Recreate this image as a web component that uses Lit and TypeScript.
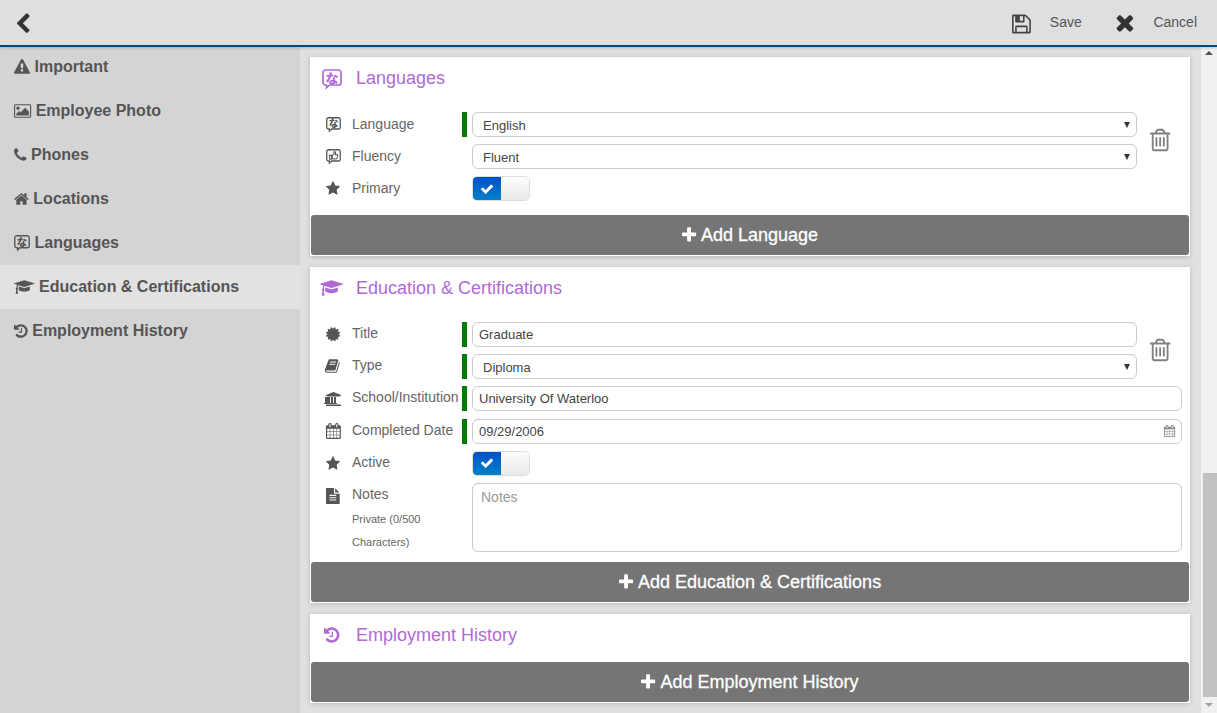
import { LitElement, html, svg, css } from "lit";
import { customElement } from "lit/decorators.js";

const P: Record<string, [string, string]> = {
  chevron: ["256 0 1280 1792", "M1427 301l-531 531 531 531q19 19 19 45t-19 45l-166 166q-19 19-45 19t-45-19l-742-742q-19-19-19-45t19-45l742-742q19-19 45-19t45 19l166 166q19 19 19 45t-19 45z"],
  warning: ["0 0 1792 1792", "M1024 1375v-190q0-14-9.5-23.5t-22.5-9.5h-192q-13 0-22.5 9.5t-9.5 23.5v190q0 14 9.5 23.5t22.5 9.5h192q13 0 22.5-9.5t9.5-23.5zm-2-374l18-459q0-12-10-19-13-11-24-11h-220q-11 0-24 11-10 7-10 21l17 457q0 10 10 16.5t24 6.5h185q14 0 23.5-6.5t10.5-16.5zm-14-934l768 1408q35 63-2 126-17 29-46.5 46t-63.5 17h-1536q-34 0-63.5-17t-46.5-46q-37-63-2-126l768-1408q17-31 47-49t65-18 65 18 47 49z"],
  picture: ["-64 0 1920 1792", "M576 576q0 80-56 136t-136 56-136-56-56-136 56-136 136-56 136 56 56 136zm1024 384v448h-1408v-192l320-320 160 160 512-512zm96-704h-1600q-13 0-22.5 9.5t-9.5 22.5v1216q0 13 9.5 22.5t22.5 9.5h1600q13 0 22.5-9.5t9.5-22.5v-1216q0-13-9.5-22.5t-22.5-9.5zm160 32v1216q0 66-47 113t-113 47h-1600q-66 0-113-47t-47-113v-1216q0-66 47-113t113-47h1600q66 0 113 47t47 113z"],
  phone: ["192 0 1408 1792", "M1600 1240q0 27-10 70.5t-21 68.5q-21 50-122 106-94 51-186 51-27 0-53-3.5t-57.5-12.5-47-14.5-55.5-20.5-49-18q-98-35-175-83-127-79-264-216t-216-264q-48-77-83-175-3-9-18-49t-20.5-55.5-14.5-47-12.5-57.5-3.5-53q0-92 51-186 56-101 106-122 25-11 68.5-21t70.5-10q14 0 21 3 18 6 53 76 11 19 30 54t35 63.5 31 53.5q3 4 17.5 25t21.5 35.5 7 28.5q0 20-28.5 50t-62 55-62 53-28.5 46q0 9 5 22.5t8.5 20.5 14 24 11.5 19q76 137 174 235t235 174q2 1 19 11.5t24 14 20.5 8.5 22.5 5q18 0 46-28.5t53-62 55-62 50-28.5q14 0 28.5 7t35.5 21.5 25 17.5q25 15 53.5 31t63.5 35 54 30q70 35 76 53 3 7 3 21z"],
  home: ["64 0 1664 1792", "M1472 992v480q0 26-19 45t-45 19h-384v-384h-256v384h-384q-26 0-45-19t-19-45v-480q0-1 .5-3t.5-3l575-474 575 474q1 2 1 6zm223-69l-62 74q-8 9-21 11h-3q-13 0-21-7l-692-577-692 577q-12 8-24 7-13-2-21-11l-62-74q-8-10-7-23.5t11-21.5l719-599q32-26 76-26t76 26l244 204v-195q0-14 9-23t23-9h192q14 0 23 9t9 23v408l219 182q10 8 11 21.5t-7 23.5z"],
  cap: ["0 0 2304 1792", "M1774 836l18 316q4 69-82 128t-235 93.5-323 34.5-323-34.5-235-93.5-82-128l18-316 574 181q22 7 48 7t48-7zm530-324q0 23-22 31l-1120 352q-4 1-10 1t-10-1l-652-206q-43 34-71 111.5t-34 178.5q63 36 63 109 0 69-58 107l58 433q2 14-8 25-9 11-24 11h-192q-15 0-24-11-10-11-8-25l58-433q-58-38-58-107 0-73 65-111 11-207 98-330l-333-104q-22-8-22-31t22-31l1120-352q4-1 10-1t10 1l1120 352q22 8 22 31z"],
  history: ["128 0 1536 1792", "M1664 896q0 156-61 298t-164 245-245 164-298 61q-172 0-327-72.5t-264-204.5q-7-10-6.5-22.5t8.5-20.5l137-138q10-9 25-9 16 2 23 12 73 95 179 147t225 52q104 0 198.5-40.5t163.5-109.5 109.5-163.5 40.5-198.5-40.5-198.5-109.5-163.5-163.5-109.5-198.5-40.5q-98 0-188 35.5t-160 101.5l137 138q31 30 14 69-17 40-59 40h-448q-26 0-45-19t-19-45v-448q0-42 40-59 39-17 69 14l130 129q107-101 244.5-156.5t284.5-55.5q156 0 298 61t245 164 164 245 61 298zm-640-288v448q0 14-9 23t-23 9h-320q-14 0-23-9t-9-23v-64q0-14 9-23t23-9h224v-352q0-14 9-23t23-9h64q14 0 23 9t9 23z"],
  plus: ["192 0 1408 1792", "M1600 736v192q0 40-28 68t-68 28h-416v416q0 40-28 68t-68 28h-192q-40 0-68-28t-28-68v-416h-416q-40 0-68-28t-28-68v-192q0-40 28-68t68-28h416v-416q0-40 28-68t68-28h192q40 0 68 28t28 68v416h416q40 0 68 28t28 68z"],
  times: ["256 0 1280 1792", "M1490 1322q0 40-28 68l-136 136q-28 28-68 28t-68-28l-294-294-294 294q-28 28-68 28t-68-28l-136-136q-28-28-28-68t28-68l294-294-294-294q-28-28-28-68t28-68l136-136q28-28 68-28t68 28l294 294 294-294q28-28 68-28t68 28l136 136q28 28 28 68t-28 68l-294 294 294 294q28 28 28 68z"],
  check: ["128 0 1536 1792", "M1671 566q0 40-28 68l-724 724-136 136q-28 28-68 28t-68-28l-136-136-362-362q-28-28-28-68t28-68l136-136q28-28 68-28t68 28l294 295 656-657q28-28 68-28t68 28l136 136q28 28 28 68z"],
  star: ["64 0 1664 1792", "M1728 647q0 22-26 48l-363 354 86 500q1 7 1 20 0 21-10.5 35.5t-30.5 14.5q-19 0-40-12l-449-236-449 236q-22 12-40 12-21 0-31.5-14.5t-10.5-35.5q0-6 2-20l86-500-364-354q-25-27-25-48 0-37 56-46l502-73 225-455q19-41 49-41t49 41l225 455 502 73q56 9 56 46z"],
  file: ["128 0 1536 1792", "M1596 476q14 14 28 36h-472v-472q22 14 36 28zm-476 164h544v1056q0 40-28 68t-68 28h-1344q-40 0-68-28t-28-68v-1600q0-40 28-68t68-28h800v544q0 40 28 68t68 28zm160 736v-64q0-14-9-23t-23-9h-704q-14 0-23 9t-9 23v64q0 14 9 23t23 9h704q14 0 23-9t9-23zm0-256v-64q0-14-9-23t-23-9h-704q-14 0-23 9t-9 23v64q0 14 9 23t23 9h704q14 0 23-9t9-23zm0-256v-64q0-14-9-23t-23-9h-704q-14 0-23 9t-9 23v64q0 14 9 23t23 9h704q14 0 23-9t9-23z"],
  bank: ["0 0 1920 1792", "M960 0l960 384v128h-128q0 26-20.5 45t-48.5 19h-1526q-28 0-48.5-19t-20.5-45h-128v-128zm-704 640h256v768h128v-768h256v768h128v-768h256v768h59q28 0 48.5 19t20.5 45v64h-1664v-64q0-26 20.5-45t48.5-19h59v-768zm1595 960q28 0 48.5 19t20.5 45v128h-1920v-128q0-26 20.5-45t48.5-19h1782z"],
  calendar: ["64 0 1664 1792", "M192 1664h288v-288h-288v288zm352 0h320v-288h-320v288zm-352-352h288v-320h-288v320zm352 0h320v-320h-320v320zm-352-384h288v-288h-288v288zm736 736h320v-288h-320v288zm-384-736h320v-288h-320v288zm768 736h288v-288h-288v288zm-384-352h320v-320h-320v320zm-352-864v-288q0-13-9.5-22.5t-22.5-9.5h-64q-13 0-22.5 9.5t-9.5 22.5v288q0 13 9.5 22.5t22.5 9.5h64q13 0 22.5-9.5t9.5-22.5zm736 864h288v-320h-288v320zm-384-384h320v-288h-320v288zm384 0h288v-288h-288v288zm32-480v-288q0-13-9.5-22.5t-22.5-9.5h-64q-13 0-22.5 9.5t-9.5 22.5v288q0 13 9.5 22.5t22.5 9.5h64q13 0 22.5-9.5t9.5-22.5zm384-64v1280q0 52-38 90t-90 38h-1408q-52 0-90-38t-38-90v-1280q0-52 38-90t90-38h128v-96q0-66 47-113t113-47h64q66 0 113 47t47 113v96h384v-96q0-66 47-113t113-47h64q66 0 113 47t47 113v96h128q52 0 90 38t38 90z"],
  cert: ["128 0 1536 1792", "M1504 896l138 135q30 28 20 70-12 41-52 51l-188 48 53 186q12 41-19 70-29 31-70 19l-186-53-48 188q-10 40-51 52-12 2-19 2-31 0-51-22l-135-138-135 138q-28 30-70 20-41-11-51-52l-48-188-186 53q-41 12-70-19-31-29-19-70l53-186-188-48q-40-10-52-51-10-42 20-70l138-135-138-135q-30-28-20-70 12-41 52-51l188-48-53-186q-12-41 19-70 29-31 70-19l186 53 48-188q10-41 51-51 41-12 70 19l135 139 135-139q29-30 70-19 41 10 51 51l48 188 186-53q41-12 70 19 31 29 19 70l-53 186 188 48q40 10 52 51 10 42-20 70z"],
  book: ["128 0 1536 1792", "M1639 478q40 57 18 129l-275 906q-19 64-76.5 107.5t-122.5 43.5h-923q-77 0-148.5-53.5t-99.5-131.5q-24-67-2-127 0-4 3-27t4-37q1-8-3-21.5t-3-19.5q2-11 8-21t16.5-23.5 16.5-23.5q23-38 45-91.5t30-91.5q3-10 .5-30t-.5-28q3-11 17-28t17-23q21-36 42-92t25-90q1-9-2.5-32t.5-28q4-13 22-30.5t22-22.5q19-26 42.5-84.5t27.5-96.5q1-8-3-25.5t-2-26.5q2-8 9-18t18-23 17-21q8-12 16.5-30.5t15-35 16-36 19.5-32 26.5-23.5 36-11.5 47.5 5.5l-1 3q38-9 51-9h761q74 0 114 56t18 130l-274 906q-36 119-71.5 153.5t-128.5 34.5h-869q-27 0-38 15-11 16-1 43 24 70 144 70h923q29 0 56-15.5t35-41.5l300-987q7-22 5-57 38 15 59 43zm-1064 2q-4 13 2 22.5t20 9.5h608q13 0 25.5-9.5t16.5-22.5l21-64q4-13-2-22.5t-20-9.5h-608q-13 0-25.5 9.5t-16.5 22.5zm-83 256q-4 13 2 22.5t20 9.5h608q13 0 25.5-9.5t16.5-22.5l21-64q4-13-2-22.5t-20-9.5h-608q-13 0-25.5 9.5t-16.5 22.5z"],
  floppy: ["128 0 1536 1792", "M512 1536h768v-384h-768v384zm896 0h128v-896q0-14-10-38.5t-20-34.5l-281-281q-10-10-34-20t-39-10v416q0 40-28 68t-68 28h-576q-40 0-68-28t-28-68v-416h-128v1280h128v-416q0-40 28-68t68-28h832q40 0 68 28t28 68v416zm-384-928v-320q0-13-9.5-22.5t-22.5-9.5h-192q-13 0-22.5 9.5t-9.5 22.5v320q0 13 9.5 22.5t22.5 9.5h192q13 0 22.5-9.5t9.5-22.5zm640 32v928q0 40-28 68t-68 28h-1344q-40 0-68-28t-28-68v-1344q0-40 28-68t68-28h928q40 0 88 20t76 48l280 280q28 28 48 76t20 88z"],
  trash: ["128 0 1408 1792", "M704 736v576q0 14-9 23t-23 9h-64q-14 0-23-9t-9-23v-576q0-14 9-23t23-9h64q14 0 23 9t9 23zm256 0v576q0 14-9 23t-23 9h-64q-14 0-23-9t-9-23v-576q0-14 9-23t23-9h64q14 0 23 9t9 23zm256 0v576q0 14-9 23t-23 9h-64q-14 0-23-9t-9-23v-576q0-14 9-23t23-9h64q14 0 23 9t9 23zm128 724v-948h-896v948q0 22 7 40.5t14.5 27 10.5 8.5h832q3 0 10.5-8.5t14.5-27 7-40.5zm-672-1076h448l-48-117q-7-9-17-11h-317q-10 2-17 11zm928 32v64q0 14-9 23t-23 9h-96v948q0 83-47 143.5t-113 60.5h-832q-66 0-113-58.5t-47-141.5v-952h-96q-14 0-23-9t-9-23v-64q0-14 9-23t23-9h309l70-167q15-37 54-63t79-26h320q40 0 79 26t54 63l70 167h309q14 0 23 9t9 23z"],
};

const icon = (name: string, size: number) => {
  const [vb, d] = P[name];
  const vw = Number(vb.split(" ")[2]);
  return html`<svg class="ic" viewBox=${vb} style="width:${(size * vw) / 1792}px;height:${size}px"><path d=${d} fill="currentColor"></path></svg>`;
};

const bubble = (size: number, kind: "lang" | "thumb") => html`<svg class="ic" viewBox="0 0 20 20" style="width:${size}px;height:${size}px">
  <path d="M3.5 1h13a2.5 2.5 0 0 1 2.5 2.5v10a2.5 2.5 0 0 1-2.5 2.5H7.5l-3 2.8V16h-1A2.5 2.5 0 0 1 1 13.5v-10A2.5 2.5 0 0 1 3.5 1z" fill="none" stroke="currentColor" stroke-width="1.7"></path>
  ${kind === "lang"
    ? svg`<text x="10" y="13.6" text-anchor="middle" class="kana">な</text>`
    : svg`<path d="M4.8 8.5h2.6v5.2H4.8zM8.3 8.7l2-2.4.6-2.8c1.4 0 2.1 1 1.7 2.4l-.4 1.6h2.4c.9 0 1.2.7 1 1.4l-1 3.4c-.2.6-.6 1-1.2 1H9.5l-1.2-.6z" fill="none" stroke="currentColor" stroke-width="1.4"></path>`}
</svg>`;

const NAV: [unknown, string, boolean?][] = [
  [icon("warning", 16), "Important"],
  [icon("picture", 16), "Employee Photo"],
  [icon("phone", 16), "Phones"],
  [icon("home", 16), "Locations"],
  [bubble(16, "lang"), "Languages"],
  [icon("cap", 16), "Education & Certifications", true],
  [icon("history", 16), "Employment History"],
];

@customElement("app-root")
export class AppRoot extends LitElement {
  static styles = css`
    :host { display: block; width: 1217px; height: 713px; overflow: hidden; font-family: "Liberation Sans", Arial, sans-serif; color: #555; background: #e0e0e0; }
    * { box-sizing: border-box; }
    .ic { display: block; flex: none; overflow: visible; }
    .kana { font: 900 13px "Noto Sans CJK JP", sans-serif; fill: currentColor; }
    header { position: relative; z-index: 2; height: 47px; background: #dfdfdf; border-bottom: 2px solid #004a80; box-shadow: 0 1px 3px rgba(0,0,0,.2); display: flex; align-items: center; padding: 0 20px 2px 15px; margin-bottom: -2px; color: #333; font-size: 14px; }
    .act { display: flex; align-items: center; color: #555; }
    .act .ic { color: #333; }
    .back { margin-right: auto; }
    .back .ic, .save .ic { margin-top: 4px; }
    .save .ic { color: #444; margin-right: 19px; }
    .save { margin-right: 34.3px; }
    .cancel .ic { margin-right: 19.5px; margin-top: 1px; }
    .shell { display: flex; height: 668px; }
    nav { width: 300px; flex: none; background: #d4d4d4; }
    .item { height: 44px; display: flex; align-items: center; gap: 4.5px; padding: 0 14px 1px; font-size: 16px; font-weight: 700; color: #555; }
    .item.on { background: #e2e2e2; }
    main { flex: 1; min-width: 0; padding: 12px 11px 0 10px; display: flex; flex-direction: column; gap: 11px; background: #e0e0e0; }
    .card { background: #fff; padding: 1px; box-shadow: 0 0 5px rgba(0,0,0,.12), 0 2px 4px rgba(0,0,0,.08); }
    .title { height: 47px; display: flex; align-items: center; padding-bottom: 6px; color: #b06ad6; font-size: 18px; }
    .tic { width: 45px; flex: none; display: flex; justify-content: center; padding-right: 3px; }
    .form { padding-top: 6.67px; display: flex; flex-direction: column; gap: 7.33px; }
    .form.a { padding-bottom: 13.67px; }
    .form.a .lab { padding-top: 1px; }
    .form.b { padding-bottom: 9.68px; }
    .group { display: flex; align-items: center; }
    .stack { flex: 1; min-width: 0; display: flex; flex-direction: column; gap: 7.33px; }
    .trash { width: 52px; flex: none; display: flex; justify-content: center; padding: 0 7px 1px 0; color: #808080; }
    .row { display: grid; grid-template-columns: 41px 110px 5px 1fr; }
    .row.long { padding-right: 7px; }
    .ric { height: 25px; width: 41px; display: flex; align-items: center; justify-content: center; padding-left: 3px; color: #555; }
    .lab { font-size: 14px; color: #666; line-height: 23px; white-space: nowrap; max-height: 69px; }
    .lab small { display: block; white-space: normal; font-size: 11px; line-height: 23px; margin-top: 2px; }
    .req { background: #007a00; height: 25px; }
    .field { margin-left: 5px; height: 25px; border: 1px solid #ccc; border-radius: 6px; background: #fff; display: flex; align-items: center; padding: 0 6px; font-size: 13px; color: #444; }
    .field.sel { padding: 2px 6px 0 10px; }
    .field .ar { margin-left: auto; width: 0; height: 0; border: 3.5px solid transparent; border-top: 6px solid #333; border-bottom: 0; }
    .field .ci { margin-left: auto; color: #888; margin-right: 0; }
    .tog { margin-left: 5px; width: 58px; height: 25px; border: 1px solid #ddd; border-radius: 5px; display: flex; overflow: hidden; }
    .tog .yes { width: 28px; background: linear-gradient(#0050c8, #0080c8); color: #fff; display: flex; align-items: center; justify-content: center; }
    .tog .no { flex: 1; background: linear-gradient(#fdfdfd, #e8e8e8); }
    .field.area { height: 69px; align-items: flex-start; padding: 5px 8px; color: #999; font-size: 14px; }
    .add { height: 40px; border-radius: 3px; background: #757575; color: #fff; display: flex; align-items: center; justify-content: center; gap: 5px; padding-top: 1px; font-size: 18px; -webkit-text-stroke: .3px #fff; }
    .sb { width: 16px; flex: none; background: #f1f1f1; display: flex; flex-direction: column; align-items: center; }
    .up { height: 16px; flex: none; display: flex; align-items: center; justify-content: center; }
    .up i, .dn i { display: block; width: 0; height: 0; border: 4px solid transparent; }
    .up i { border-bottom: 4px solid #505050; border-top: 0; }
    .dn i { border-top: 4px solid #a3a3a3; border-bottom: 0; }
    .track { flex: 1; width: 100%; display: flex; flex-direction: column; justify-content: flex-end; align-items: center; }
    .thumb { width: 14px; height: 224px; background: #c1c1c1; margin-left: 1px; }
    .dn { height: 16px; flex: none; display: flex; align-items: center; justify-content: center; }
  `;

  private row(ic: unknown, label: unknown, req: boolean, field: unknown, long = false) {
    return html`<div class="row ${long ? "long" : ""}">
      <div class="ric">${ic}</div>
      <div class="lab">${label}</div>
      <div class=${req ? "req" : ""}></div>
      ${field}
    </div>`;
  }
  private sel(t: string) {
    return html`<div class="field sel"><span>${t}</span><span class="ar"></span></div>`;
  }
  private inp(t: string, extra: unknown = "") {
    return html`<div class="field"><span>${t}</span>${extra}</div>`;
  }
  private tog() {
    return html`<div class="tog"><div class="yes">${icon("check", 14)}</div><div class="no"></div></div>`;
  }
  private add(t: string) {
    return html`<div class="add">${icon("plus", 18)}<span>${t}</span></div>`;
  }

  render() {
    return html`
      <header>
        <div class="act back">${icon("chevron", 22)}</div>
        <div class="act save">${icon("floppy", 22)}<span>Save</span></div>
        <div class="act cancel">${icon("times", 25)}<span>Cancel</span></div>
      </header>
      <div class="shell">
        <nav>
          ${NAV.map(([i, t, on]) => html`<div class="item ${on ? "on" : ""}">${i}<span>${t}</span></div>`)}
        </nav>
        <main>
          <section class="card">
            <div class="title"><div class="tic">${bubble(20, "lang")}</div><span>Languages</span></div>
            <div class="form a">
              <div class="group">
                <div class="stack">
                  ${this.row(bubble(15, "lang"), "Language", true, this.sel("English"))}
                  ${this.row(bubble(15, "thumb"), "Fluency", false, this.sel("Fluent"))}
                </div>
                <div class="trash">${icon("trash", 26)}</div>
              </div>
              ${this.row(icon("star", 15), "Primary", false, this.tog())}
            </div>
            ${this.add("Add Language")}
          </section>
          <section class="card">
            <div class="title"><div class="tic">${icon("cap", 18)}</div><span>Education &amp; Certifications</span></div>
            <div class="form b">
              <div class="group">
                <div class="stack">
                  ${this.row(icon("cert", 16.5), "Title", true, this.inp("Graduate"))}
                  ${this.row(icon("book", 16), "Type", true, this.sel("Diploma"))}
                </div>
                <div class="trash">${icon("trash", 26)}</div>
              </div>
              ${this.row(icon("bank", 14), "School/Institution", true, this.inp("University Of Waterloo"), true)}
              ${this.row(icon("calendar", 16), "Completed Date", true, this.inp("09/29/2006", html`<span class="ci">${icon("calendar", 12)}</span>`), true)}
              ${this.row(icon("star", 15), "Active", false, this.tog())}
              ${this.row(icon("file", 16), html`Notes<small>Private (0/500 Characters)</small>`, false, html`<div class="field area">Notes</div>`, true)}
            </div>
            ${this.add("Add Education & Certifications")}
          </section>
          <section class="card">
            <div class="title"><div class="tic">${icon("history", 18)}</div><span>Employment History</span></div>
            ${this.add("Add Employment History")}
          </section>
        </main>
        <div class="sb">
          <div class="up"><i></i></div>
          <div class="track"><div class="thumb"></div></div>
          <div class="dn"><i></i></div>
        </div>
      </div>
    `;
  }
}
